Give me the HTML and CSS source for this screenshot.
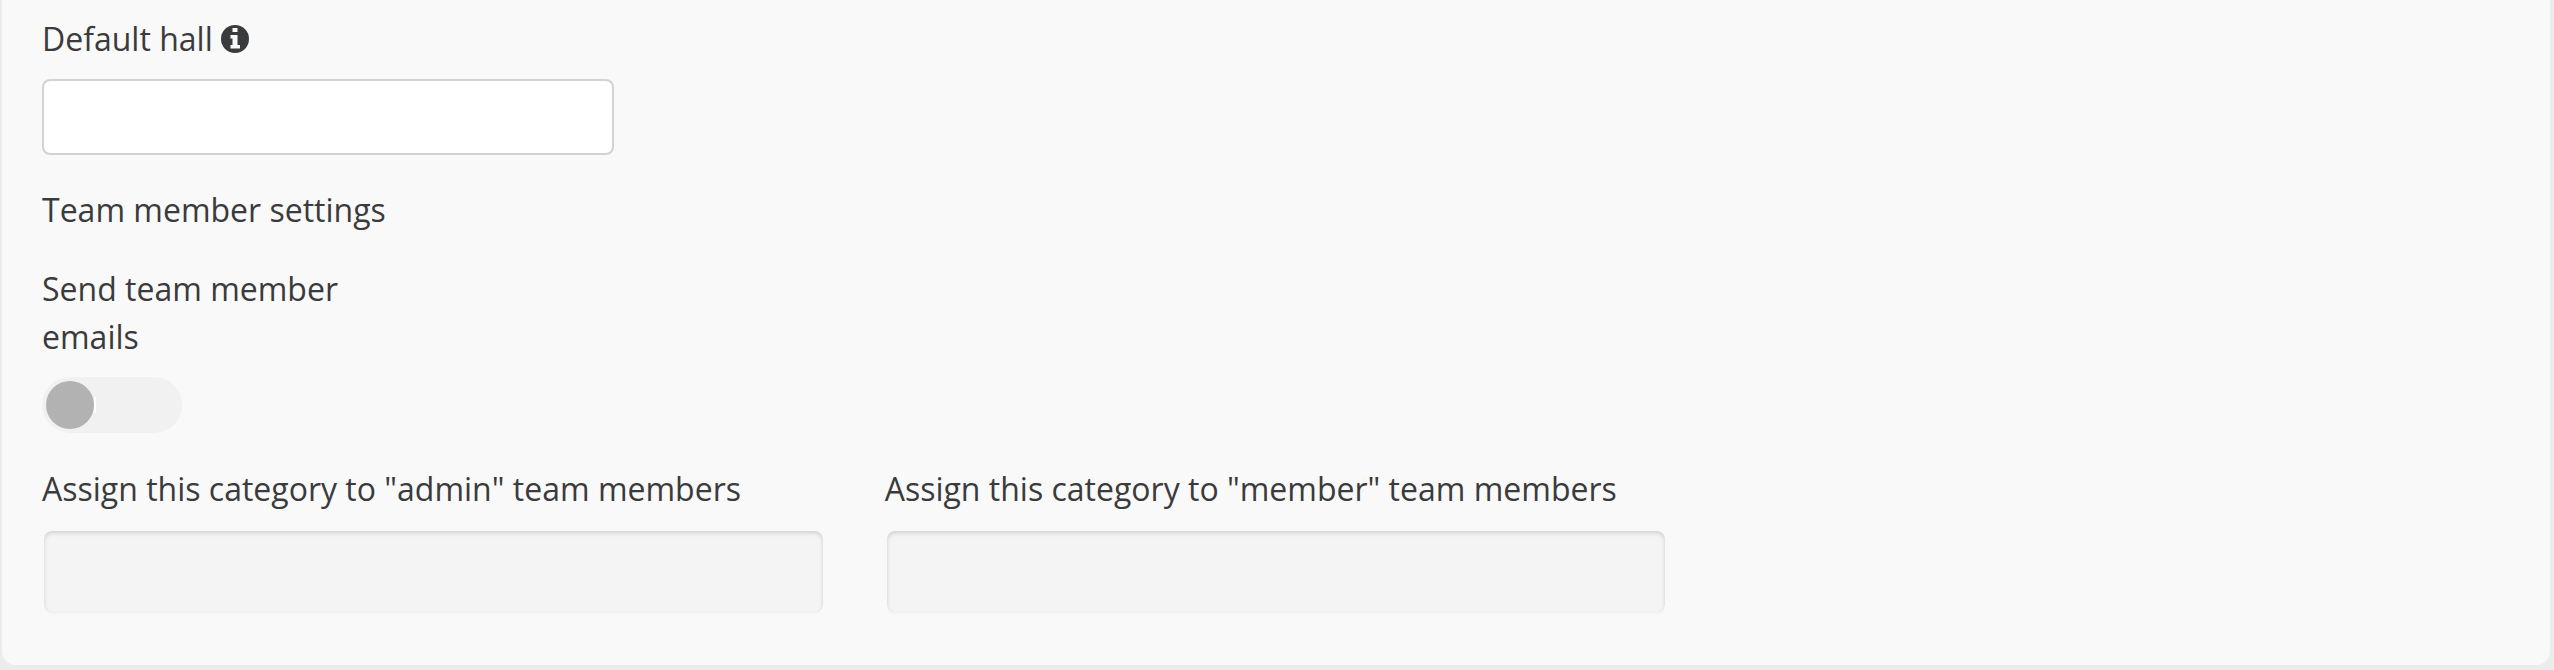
FILE: index.html
```html
<!DOCTYPE html>
<html lang="en">
<head>
  <meta charset="UTF-8">
  <meta name="viewport" content="width=device-width, initial-scale=1.0">
  <title>Category settings</title>
  <link rel="stylesheet" href="styles.css">
</head>
<body>
  <form class="panel">
    <div class="row row-quarters">
      <div class="field">
        <div class="label-line">
          <label for="default-hall">Default hall</label>
          <svg class="info-icon" viewBox="0 0 28 28" aria-hidden="true">
            <circle cx="14" cy="14" r="14" />
            <path d="M11.500 3h5v4h-5zM9.500 10h7v10h2.500v3.500h-9.500v-3.500h2v-6.500h-2z" />
          </svg>
        </div>
        <input type="text" class="text-input" id="default-hall">
      </div>
    </div>

    <h2>Team member settings</h2>

    <div class="row row-sixths">
      <div class="field">
        <label for="send-emails">Send team member emails</label>
        <input type="checkbox" class="toggle" id="send-emails">
      </div>
    </div>

    <div class="row row-thirds">
      <div class="field">
        <label for="assign-admin">Assign this category to "admin" team members</label>
        <input type="text" class="text-input inset" id="assign-admin">
      </div>
      <div class="field">
        <label for="assign-member">Assign this category to "member" team members</label>
        <input type="text" class="text-input inset" id="assign-member">
      </div>
    </div>
  </form>
</body>
</html>
```

FILE: styles.css
```css
* {
  margin: 0;
  padding: 0;
  box-sizing: border-box;
}

body {
  background: #ececec;
  color: #3a3b3c;
  font-family: 'Open Sans', sans-serif;
  font-size: 32px;
  line-height: 48px;
  padding: 0 4px 5px 2px;
}

.panel {
  display: flex;
  flex-direction: column;
  gap: 32px;
  padding: 15px 40px 50px;
  background: #f9f9f9;
  border-radius: 0 0 14px 14px;
}

h2 {
  font-size: 32px;
  font-weight: 400;
  line-height: 46px;
}

.row {
  display: grid;
  gap: 60px;
}

.row-quarters {
  grid-template-columns: repeat(4, 1fr);
}

.row-thirds {
  grid-template-columns: repeat(3, 1fr);
}

.row-sixths {
  grid-template-columns: repeat(6, 1fr);
}

.field {
  display: flex;
  flex-direction: column;
  gap: 16px;
}

.label-line {
  display: flex;
  align-items: center;
  gap: 8px;
}

.info-icon {
  width: 28px;
  height: 28px;
}

.info-icon circle {
  fill: #3a3b3c;
}

.info-icon path {
  fill: #f9f9f9;
}

.text-input {
  width: 100%;
  height: 76px;
  padding: 0 16px;
  font: inherit;
  color: inherit;
  background: #fff;
  border: 2px solid #d2d2d2;
  border-radius: 8px;
}

.text-input.inset {
  height: 86px;
  background: #f4f4f4;
  background-clip: padding-box;
  border-color: #f8f8f8;
  border-radius: 10px;
  box-shadow: inset 0 2px 4px rgba(0, 0, 0, 0.15);
}

.toggle {
  appearance: none;
  display: flex;
  align-items: center;
  width: 140px;
  height: 56px;
  padding: 4px;
  background: #f1f1f1;
  border-radius: 28px;
  cursor: pointer;
}

.toggle::before {
  content: "";
  width: 48px;
  height: 48px;
  background: #b2b2b2;
  border-radius: 50%;
}

/* thin edge next to the knob */
.toggle::after {
  content: "";
  width: 2px;
  height: 16px;
  background: #fff;
}

.toggle:checked {
  flex-direction: row-reverse;
}
```
